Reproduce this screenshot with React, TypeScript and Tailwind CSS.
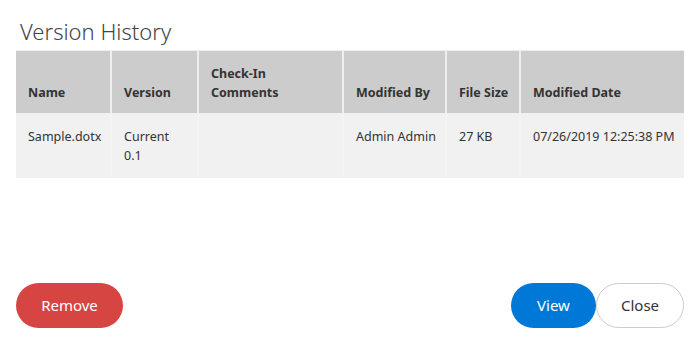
const cols = [
  { label: 'Name', w: 'w-[95px]' },
  { label: 'Version', w: 'w-[87px]' },
  { label: 'Check-In Comments', w: 'w-[145px]' },
  { label: 'Modified By', w: 'w-[103px]' },
  { label: 'File Size', w: 'w-[74px]' },
  { label: 'Modified Date', w: '' },
];

const row = ['Sample.dotx', 'Current 0.1', '', 'Admin Admin', '27 KB', '07/26/2019 12:25:38 PM'];

export default function App() {
  return (
    <div className="w-[700px] h-[359px] bg-white flex flex-col px-4 pb-[31px] font-['Noto_Sans',sans-serif] text-[#333]">
      {/* Title */}
      <h1 className="pl-1 pt-[16px] h-[50px] text-[22px] font-light leading-[30px] text-[#444]">
        Version History
      </h1>

      {/* Table */}
      <table className="w-[668px] table-fixed border-collapse text-[12.5px] leading-[19px] border-t border-[#eee]">
        <thead>
          <tr className="bg-[#cccccc]">
            {cols.map((c) => (
              <th
                key={c.label}
                className={`${c.w} h-[62px] align-bottom text-left font-bold whitespace-nowrap pl-3 pr-1 pb-[11px] border-l-2 border-[#eeeeee] first:border-l-0`}
              >
                {c.label === 'Check-In Comments' ? (
                  <>
                    Check-In
                    <br />
                    Comments
                  </>
                ) : (
                  c.label
                )}
              </th>
            ))}
          </tr>
        </thead>
        <tbody>
          <tr className="bg-[#f1f1f1]">
            {row.map((v, i) => (
              <td
                key={i}
                className="h-[65px] align-top whitespace-nowrap pl-3 pr-1 pt-[14px] border-l-2 border-[#f4f4f4] first:border-l-0"
              >
                {v === 'Current 0.1' ? (
                  <>
                    Current
                    <br />
                    0.1
                  </>
                ) : (
                  v
                )}
              </td>
            ))}
          </tr>
        </tbody>
      </table>

      <div className="flex-1" />

      {/* Footer buttons */}
      <div className="flex items-center">
        <button className="h-[45px] w-[107px] rounded-full bg-[#d64541] text-white text-[15px]">
          Remove
        </button>
        <div className="flex-1" />
        <button className="h-[45px] w-[85px] rounded-full bg-[#0078d7] text-white text-[15px]">
          View
        </button>
        <button className="h-[45px] w-[88px] rounded-full bg-white border border-[#cccccc] text-[#333] text-[15px]">
          Close
        </button>
      </div>
    </div>
  );
}
